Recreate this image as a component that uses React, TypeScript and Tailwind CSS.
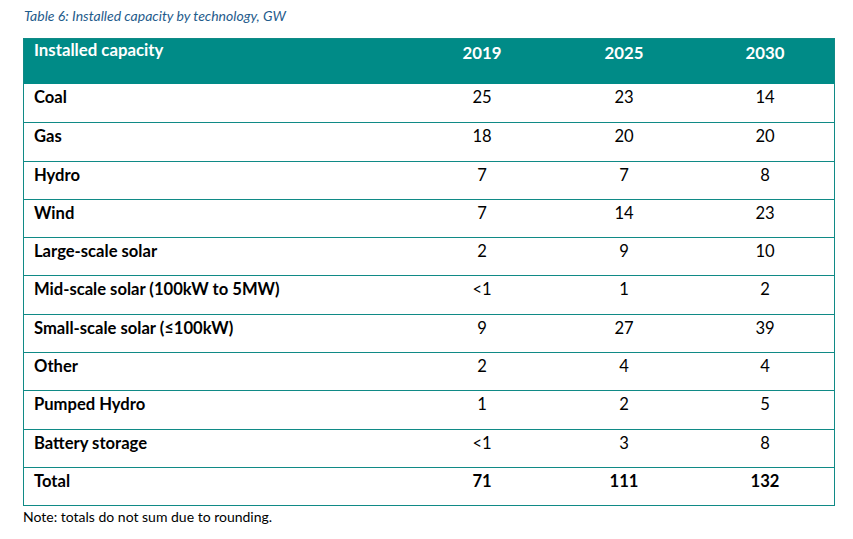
import React from "react";

type Row = { name: string; v: [string, string, string]; bold?: boolean };

const rows: Row[] = [
  { name: "Coal", v: ["25", "23", "14"] },
  { name: "Gas", v: ["18", "20", "20"] },
  { name: "Hydro", v: ["7", "7", "8"] },
  { name: "Wind", v: ["7", "14", "23"] },
  { name: "Large-scale solar", v: ["2", "9", "10"] },
  { name: "Mid-scale solar (100kW to 5MW)", v: ["<1", "1", "2"] },
  { name: "Small-scale solar (≤100kW)", v: ["9", "27", "39"] },
  { name: "Other", v: ["2", "4", "4"] },
  { name: "Pumped Hydro", v: ["1", "2", "5"] },
  { name: "Battery storage", v: ["<1", "3", "8"] },
  { name: "Total", v: ["71", "111", "132"], bold: true },
];

const cols = "grid grid-cols-[387px_142px_142px_140px]";

const App: React.FC = () => {
  return (
    <div
      className="w-[853px] h-[539px] bg-white text-black"
      style={{ fontFamily: "Lato, 'Open Sans', sans-serif" }}
    >
      <div className="pt-[6px] pl-[24px] text-[14px] italic text-[#1f5c8c] leading-[20px]">
        Table 6: Installed capacity by technology, GW
      </div>
      <div className="ml-[23px] mt-[12px] w-[812px] border border-[#108a86]">
        <div className={`${cols} h-[45px] bg-[#008b87] text-white font-bold text-[16.8px] leading-[20px]`}>
          <div className="pl-[10px] pt-[1px]">Installed capacity</div>
          <div className="text-center pt-[4px]">2019</div>
          <div className="text-center pt-[4px]">2025</div>
          <div className="text-center pt-[4px]">2030</div>
        </div>
        {rows.map((r, i) => (
          <div
            key={r.name}
            className={`${cols} h-[38.3px] text-[16.6px] leading-[20px] ${
              i > 0 ? "border-t border-[#108a86]" : ""
            }`}
          >
            <div className="pl-[10px] pt-[3px] font-bold">{r.name}</div>
            {r.v.map((x, j) => (
              <div key={j} className={`text-center pt-[3px] ${r.bold ? "font-bold" : ""}`}>
                {x}
              </div>
            ))}
          </div>
        ))}
      </div>
      <div className="pl-[23px] pt-[2px] text-[14px] leading-[18px]">
        Note: totals do not sum due to rounding.
      </div>
    </div>
  );
};

export default App;
